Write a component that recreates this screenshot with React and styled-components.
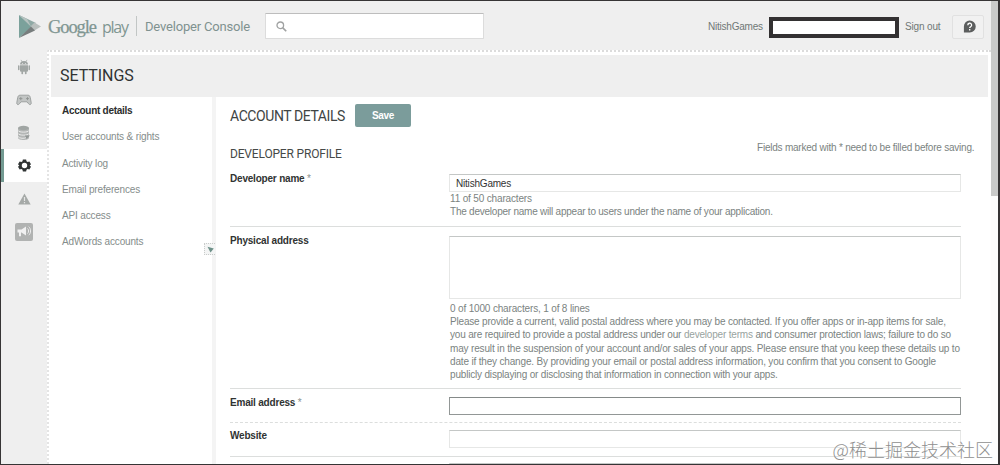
import React from "react";
import styled, { createGlobalStyle } from "styled-components";

const Global = createGlobalStyle`
  * { box-sizing: border-box; }
  body { margin: 0; background: #fff; font-family: "Liberation Sans", Arial, sans-serif; }
`;

const Frame = styled.div`
  position: relative;
  width: 1000px;
  height: 465px;
  border: 1px solid #363435;
  border-right-width: 2px;
  background: #fff;
  overflow: hidden;
  display: flex;
`;
const Page = styled.div`
  width: 990px;
  height: 463px;
  display: flex;
  flex-direction: column;
  background: #efefef;
`;
const ScrollTrack = styled.div`
  width: 7px;
  height: 463px;
  background: #fdfdfd;
`;
const ScrollThumb = styled.div`
  height: 195px;
  background: #c9cac9;
`;
const TopBar = styled.header`
  height: 49px;
  flex: none;
  display: flex;
  align-items: flex-start;
  padding-left: 17px;
`;
const Brand = styled.div`
  display: flex;
  align-items: center;
  height: 50px;
  color: #7f9692;
`;
const GoogleWord = styled.span`
  width: 54px;
  margin-left: 7px;
  margin-top: 1px;
  font: 18.5px/24px "Liberation Serif", serif;
  letter-spacing: -1.1px;
  white-space: nowrap;
  -webkit-text-stroke: 0.25px #7f9692;
`;
const PlayWord = styled.span`
  width: 27px;
  margin-top: 1px;
  font: 16px/24px "Open Sans", sans-serif;
  letter-spacing: -1.25px;
`;
const BrandDivider = styled.span`
  width: 1px;
  height: 20px;
  margin: 0 8px 0 7px;
  background: #c2c6c5;
`;
const ConsoleWord = styled.span`
  width: 107px;
  margin-top: 2px;
  font: 13px/20px Roboto, sans-serif;
  letter-spacing: -0.18px;
  white-space: nowrap;
  color: #7f9290;
`;
const Search = styled.div`
  width: 219px;
  height: 26px;
  margin: 12px 0 0 13px;
  padding: 0 0 0 10px;
  display: flex;
  align-items: center;
  background: #fff;
  border: 1px solid #dcdcdc;
  border-top-color: #bdbdbd;
  border-radius: 1px;
`;
const Account = styled.div`
  display: flex;
  align-items: center;
  height: 50px;
  margin-left: auto;
  padding-right: 7px;
  font-size: 10px;
  color: #6f7876;
  white-space: nowrap;
`;
const AccountName = styled.span`
  width: 61px;
  letter-spacing: -0.22px;
`;
const Redacted = styled.span`
  width: 130px;
  height: 21px;
  margin-top: 3px;
  border: 4px solid #333132;
  background: #fff;
`;
const SignOut = styled.span`
  width: 47px;
  margin-left: 6px;
  letter-spacing: -0.15px;
`;
const HelpButton = styled.span`
  width: 32px;
  height: 24px;
  margin-top: 1px;
  display: flex;
  align-items: center;
  justify-content: center;
  padding-left: 3px;
  border: 1px solid #e1e1e1;
  border-radius: 2px;
  background: #f1f1f1;
`;
const Body = styled.div`
  flex: 1;
  min-height: 0;
  display: flex;
`;
const Rail = styled.nav`
  width: 46px;
  flex: none;
`;
const RailItem = styled.div`
  height: 33px;
  display: flex;
  align-items: center;
  justify-content: center;
  border-left: ${(p) => (p.$active ? "3px solid #739a92" : "0")};
  padding-right: ${(p) => (p.$active ? "3px" : "0")};
  background: ${(p) => (p.$active ? "#fff" : "transparent")};
`;
const Sheet = styled.main`
  flex: 1;
  min-width: 0;
  display: flex;
  flex-direction: column;
  background: #fff;
  border-top: 2px dotted #dcdcdc;
  border-left: 2px dotted #e4e4e4;
`;
const TitleBand = styled.h1`
  height: 42px;
  margin: 3px 3px 0 2px;
  padding-left: 9px;
  flex: none;
  font: 16px/42px Roboto, sans-serif;
  letter-spacing: -0.05px;
  color: #303333;
  background: #efefef;
`;
const Columns = styled.div`
  flex: 1;
  min-height: 0;
  display: flex;
`;
const Menu = styled.div`
  position: relative;
  width: 167px;
  flex: none;
  padding: 1px 0 0 13px;
  border-right: 4px solid #f4f4f4;
`;
const MenuItem = styled.div`
  height: 26.3px;
  font-size: 10px;
  line-height: 26px;
  letter-spacing: ${(p) => (p.$active ? "-0.27px" : "-0.15px")};
  white-space: nowrap;
  font-weight: ${(p) => (p.$active ? "bold" : "normal")};
  color: ${(p) => (p.$active ? "#2c2e2e" : "#858d8b")};
`;
const Collapse = styled.span`
  position: absolute;
  right: -3px;
  top: 146px;
  width: 11px;
  height: 12px;
  display: flex;
  align-items: center;
  justify-content: center;
  background: #f4f5f5;
  border: 1px dotted #c9cccb;
  border-right: 0;
`;
const Form = styled.section`
  width: 731px;
  flex: none;
  margin-left: 14px;
`;
const FormHeader = styled.div`
  display: flex;
  align-items: center;
  height: 37px;
`;
const FormTitle = styled.h2`
  margin: 0;
  width: 125px;
  white-space: nowrap;
  font: 14px/20px Roboto, sans-serif;
  letter-spacing: -0.42px;
  color: #404443;
`;
const SaveButton = styled.button`
  width: 56px;
  height: 23px;
  padding: 0;
  border: 0;
  border-radius: 2px;
  background: #7b9c9b;
  color: #fff;
  font: bold 10px/22px "Liberation Sans", sans-serif;
  letter-spacing: -0.3px;
`;
const FormNote = styled.div`
  display: flex;
  justify-content: flex-end;
  height: 14px;
  margin: 7px -14px 0 0;
  font-size: 10px;
  line-height: 14px;
  color: #7b8381;
`;
const NoteText = styled.span`
  width: 218px;
  white-space: nowrap;
  letter-spacing: -0.22px;
`;
const SectionTitle = styled.h3`
  margin: -9px 0 0;
  height: 22px;
  font: 12px/16px Roboto, sans-serif;
  letter-spacing: -0.17px;
  color: #454948;
`;
const Row = styled.div`
  display: flex;
  height: ${(p) => p.$height}px;
  padding-top: ${(p) => p.$top}px;
  border-bottom: 1px ${(p) => (p.$dashed ? "dashed" : "solid")} #dcdedd;
`;
const Label = styled.label`
  width: 219px;
  flex: none;
  padding-top: ${(p) => p.$drop || 0}px;
  font: bold 10px/9px "Liberation Sans", sans-serif;
  letter-spacing: -0.2px;
  color: #303332;
`;
const Star = styled.span`
  font-weight: normal;
  color: #8b9391;
`;
const Field = styled.div`
  width: 512px;
`;
const Box = styled.div`
  height: ${(p) => p.$height || 18}px;
  padding-left: 6px;
  border: 1px solid ${(p) => (p.$focus ? "#929796" : "#e6e7e6")};
  border-top-color: ${(p) => (p.$focus ? "#858a89" : "#c4c7c6")};
  background: #fff;
  font-size: 10px;
  line-height: 17px;
  letter-spacing: -0.2px;
  color: #333;
`;
const Help = styled.div`
  padding-left: 1px;
  font-size: 10px;
  line-height: 13.2px;
  white-space: nowrap;
  color: #7b8381;
  letter-spacing: ${(p) => p.$spacing}px;
`;
const Link = styled.span`
  color: #98a3a0;
`;
const HelpGroup = styled.div`
  padding-top: ${(p) => p.$top}px;
`;
const Watermark = styled.div`
  position: absolute;
  right: 5px;
  bottom: 3px;
  font: 300 18px/24px "Noto Sans CJK SC", sans-serif;
  color: #8f8f8f;
  text-shadow: 0 0 1px #fff;
  white-space: nowrap;
`;

const PlayLogo = () => (
  <svg width="23" height="25" viewBox="0 0 23 25">
    <path d="M1 1v23L14 12.5z" fill="#7ba19b" />
    <path d="M1 1l17 8-5 4z" fill="#8fa9a5" />
    <path d="M16.5 8.5L23 12.5l-6.5 4-4-4z" fill="#b9bfbd" />
    <path d="M1 24l12-11.5 4 4z" fill="#777d7d" />
    <path d="M1 1l12 11.5L9 5z" fill="#b7c3c0" />
  </svg>
);
const SearchIcon = () => (
  <svg width="11" height="11" viewBox="0 0 10 10" fill="none" stroke="#a0a2a2">
    <circle cx="3.9" cy="3.9" r="3" strokeWidth="1.2" />
    <path d="M6.2 6.2l3.1 3.1" strokeWidth="1.5" />
  </svg>
);
const HelpIcon = () => (
  <svg width="13" height="13" viewBox="0 0 13 13">
    <path d="M6.7.4a6 6 0 1 1 0 12.1H.9V6.4A5.900 5.900 0 0 1 6.700.400z" fill="#5c5e5e" />
    <path d="M4.800 5.200a1.900 1.900 0 1 1 2.800 1.600c-.6.4-.9.6-.9 1.300M6.700 9.100v1.300" fill="none" stroke="#fff" strokeWidth="1.300" />
  </svg>
);
const AndroidIcon = () => (
  <svg width="14" height="16" viewBox="0 0 14 16" fill="#a1a6a4">
    <path d="M3 5.6a4 3.6 0 0 1 8 0zM3 6.3h8v5.400a1 1 0 0 1-1 1H4a1 1 0 0 1-1-1z" />
    <rect x="1" y="6.200" width="1.500" height="5" rx=".7" />
    <rect x="11.500" y="6.200" width="1.500" height="5" rx=".7" />
    <rect x="4.400" y="12" width="1.700" height="3.200" rx=".7" />
    <rect x="7.900" y="12" width="1.700" height="3.200" rx=".7" />
    <path d="M4 .9l1.200 2M10 .9l-1.200 2" stroke="#a1a6a4" strokeWidth=".7" />
    <path d="M5 4h.9v.8H5zM8.100 4H9v.8h-.9z" fill="#efefef" />
  </svg>
);
const GameIcon = () => (
  <svg width="16" height="12" viewBox="0 0 16 12">
    <path d="M4 1.200h8c1.500 0 2 1 2.300 2.500l.9 5c.3 2-1.500 2.600-2.600 1.100L11 7.800H5L3.400 9.800C2.300 11.300.5 10.700.8 8.700l.9-5C2 2.200 2.500 1.200 4 1.200z" fill="#c2c5c4" stroke="#9ea2a1" strokeWidth="1" />
    <path d="M4.800 3v3.200M3.200 4.600h3.200M10 4.600h3M11.500 3.100v3" stroke="#8e9391" strokeWidth=".9" />
  </svg>
);
const DatabaseIcon = () => (
  <svg width="14" height="16" viewBox="0 0 14 16">
    <path d="M1 3v9.800c0 3 11 3 11 0V3z" fill="#b3b6b5" />
    <ellipse cx="6.500" cy="3" rx="5.500" ry="2.200" fill="#a0a5a3" />
    <path d="M1 5.500c1 2.200 10 2.200 11 0M1 8.500c1 2.200 10 2.200 11 0M1 11.500c1 2.200 7 2.200 8 1" fill="none" stroke="#efefef" strokeWidth=".9" />
    <path d="M8 10.500l1.500 3.500 3.500-3.500z" fill="#929796" />
  </svg>
);
const GearIcon = () => (
  <svg width="13" height="13" viewBox="0 0 24 24">
    <path
      fill="#303434"
      fillRule="evenodd"
      d="M9 1h6l.7 3.200 2 1.200L21 4.400l3 5.200L21.500 12l2.500 2.400-3 5.200-3.300-1-2 1.200L15 23H9l-.7-3.200-2-1.200-3.300 1-3-5.200L2.500 12 0 9.600l3-5.200 3.300 1 2-1.200zM12 7a5 5 0 1 0 0 10 5 5 0 0 0 0-10z"
    />
  </svg>
);
const WarningIcon = () => (
  <svg width="13" height="12" viewBox="0 0 13 12">
    <path d="M6.500.500L12.700 11.500H.300z" fill="#a5a9a7" />
    <path d="M6.500 4v4M6.500 9v1.300" stroke="#e4e5e4" strokeWidth="1.200" />
  </svg>
);
const MegaphoneIcon = () => (
  <svg width="18" height="18" viewBox="0 0 18 18">
    <rect width="18" height="18" rx="2" fill="#b1b3b2" />
    <path d="M2.500 6.500h4L11 3.500v9l-4.500-3H6v3.800H4V9.500H2.500z" fill="#f1f1f1" />
    <path d="M12.500 5.500c1.500 1 1.500 4 0 5M13.700 3.700c2.500 2 2.500 6.500 0 8.500" fill="none" stroke="#eee" strokeWidth="1" />
  </svg>
);

const railIcons = [AndroidIcon, GameIcon, DatabaseIcon, GearIcon, WarningIcon, MegaphoneIcon];
const menu = [
  "Account details",
  "User accounts & rights",
  "Activity log",
  "Email preferences",
  "API access",
  "AdWords accounts",
];

export default function App() {
  return (
    <Frame>
      <Global />
      <Page>
        <TopBar>
          <Brand>
            <PlayLogo />
            <GoogleWord>Google</GoogleWord>
            <PlayWord>play</PlayWord>
            <BrandDivider />
            <ConsoleWord>Developer Console</ConsoleWord>
          </Brand>
          <Search>
            <SearchIcon />
          </Search>
          <Account>
            <AccountName>NitishGames</AccountName>
            <Redacted />
            <SignOut>Sign out</SignOut>
            <HelpButton>
              <HelpIcon />
            </HelpButton>
          </Account>
        </TopBar>
        <Body>
          <Rail>
            {railIcons.map((Icon, i) => (
              <RailItem key={i} $active={i === 3}>
                <Icon />
              </RailItem>
            ))}
          </Rail>
          <Sheet>
            <TitleBand>SETTINGS</TitleBand>
            <Columns>
              <Menu>
                {menu.map((m, i) => (
                  <MenuItem key={m} $active={i === 0}>
                    {m}
                  </MenuItem>
                ))}
                <Collapse>
                  <svg width="7" height="7" viewBox="0 0 7 7">
                    <path d="M.5.800l6.300 1.700-3.300 4z" fill="#6e9189" />
                  </svg>
                </Collapse>
              </Menu>
              <Form>
                <FormHeader>
                  <FormTitle>ACCOUNT DETAILS</FormTitle>
                  <SaveButton>Save</SaveButton>
                </FormHeader>
                <FormNote>
                  <NoteText>Fields marked with * need to be filled before saving.</NoteText>
                </FormNote>
                <SectionTitle>DEVELOPER PROFILE</SectionTitle>
                <Row $height={59} $top={6}>
                  <Label>
                    Developer name <Star>*</Star>
                  </Label>
                  <Field>
                    <Box>NitishGames</Box>
                    <HelpGroup $top={0}>
                      <Help $spacing={-0.16}>11 of 50 characters</Help>
                      <Help $spacing={-0.233}>The developer name will appear to users under the name of your application.</Help>
                    </HelpGroup>
                  </Field>
                </Row>
                <Row $height={162} $top={9}>
                  <Label>Physical address</Label>
                  <Field>
                    <Box $height={63} />
                    <HelpGroup $top={3}>
                      <Help $spacing={-0.16}>0 of 1000 characters, 1 of 8 lines</Help>
                      <Help $spacing={-0.183}>Please provide a current, valid postal address where you may be contacted. If you offer apps or in-app items for sale,</Help>
                      <Help $spacing={-0.185}>you are required to provide a postal address under our <Link>developer terms</Link> and consumer protection laws; failure to do so</Help>
                      <Help $spacing={-0.163}>may result in the suspension of your account and/or sales of your apps. Please ensure that you keep these details up to</Help>
                      <Help $spacing={-0.17}>date if they change. By providing your email or postal address information, you confirm that you consent to Google</Help>
                      <Help $spacing={-0.185}>publicly displaying or disclosing that information in connection with your apps.</Help>
                    </HelpGroup>
                  </Field>
                </Row>
                <Row $height={34} $top={8} $dashed>
                  <Label $drop={1}>
                    Email address <Star>*</Star>
                  </Label>
                  <Field>
                    <Box $focus />
                  </Field>
                </Row>
                <Row $height={34} $top={7}>
                  <Label $drop={1}>Website</Label>
                  <Field>
                    <Box />
                  </Field>
                </Row>
                <Row $height={34} $top={6}>
                  <Label />
                  <Field>
                    <Box />
                  </Field>
                </Row>
              </Form>
            </Columns>
          </Sheet>
        </Body>
      </Page>
      <ScrollTrack>
        <ScrollThumb />
      </ScrollTrack>
      <Watermark>@稀土掘金技术社区</Watermark>
    </Frame>
  );
}
